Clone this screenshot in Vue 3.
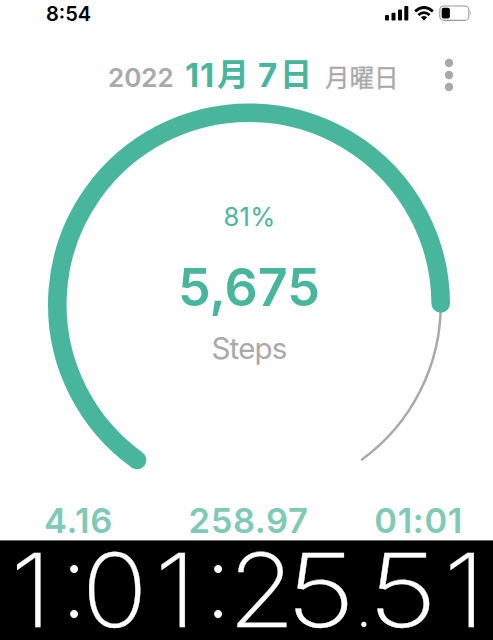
<script setup>
const clock = [
  { ch: '1', w: 62 }, { ch: ':', w: 22, kind: 'colon' },
  { ch: '0', w: 61 }, { ch: '1', w: 61 }, { ch: ':', w: 24, kind: 'colon' },
  { ch: '2', w: 60 }, { ch: '5', w: 65, kind: 'wide' }, { ch: '.', w: 16, kind: 'point' },
  { ch: '5', w: 67, kind: 'wide' }, { ch: '1', w: 53 }
]
</script>

<template>
  <main class="screen">
    <header class="status">
      <span class="time">8:54</span>
      <svg class="indicators" width="90" height="18" viewBox="0 0 90 18">
        <g fill="#000">
          <rect x="0" y="11" width="4" height="5.5" rx="1" />
          <rect x="6.5" y="8.7" width="4" height="7.8" rx="1" />
          <rect x="13" y="5.4" width="4" height="11.1" rx="1" />
          <rect x="19.3" y="2" width="4" height="14.5" rx="1" />
          <path d="M36.3 13.2Q39 11.2 41.7 13.2L39 16.2Z" stroke="#000" stroke-width=".7" stroke-linejoin="round" />
        </g>
        <g fill="none" stroke="#000" stroke-width="2.8">
          <path d="M30.1 7.4Q39 -0.4 47.9 7.4" />
          <path d="M33.4 11Q39 6.2 44.6 11" />
        </g>
        <rect x="54.8" y="2" width="29" height="14.4" rx="4" fill="none" stroke="#999" stroke-width="1.1" />
        <rect x="56.7" y="3.8" width="8.2" height="10.8" rx="2" fill="#000" />
        <path d="M85.4 7.2Q87.2 9.2 85.4 11.3Z" fill="#888" />
      </svg>
    </header>
    <section class="date">
      <span class="year">2022</span>
      <span class="day"><b>11</b><i>月</i><b class="seven">7</b><i>日</i></span>
      <span class="weekday">月曜日</span>
      <svg class="more" width="12" height="36" viewBox="0 0 12 36" fill="#a9a9a9">
        <circle cx="6" cy="6" r="4.2" /><circle cx="6" cy="18" r="4.2" /><circle cx="6" cy="30" r="4.2" />
      </svg>
    </section>
    <section class="progress">
      <svg class="ring" width="493" height="400" viewBox="0 100 493 400" fill="none" stroke-linecap="round">
        <path d="M440.7 303A191.7 191.7 0 0 1 362 459.5" stroke="#a9a9a9" stroke-width="2.5" />
        <path d="M137 460A191.7 191.7 0 1 1 440.7 303.5" stroke="#48b69d" stroke-width="18.6" />
      </svg>
      <div class="summary">
        <span class="percent">81%</span>
        <strong class="count">5,675</strong>
        <span class="unit">Steps</span>
      </div>
    </section>
    <section class="stats">
      <span>4.16</span><span class="calories">258.97</span><span>01:01</span>
    </section>
    <footer class="stopwatch">
      <span v-for="(c, i) in clock" :key="i" :class="c.kind" :style="{ width: c.w + 'px' }">{{ c.ch }}</span>
    </footer>
  </main>
</template>

<style>
body { margin: 0; background: #fff; }
</style>
<style scoped>
.screen { width: 493px; height: 640px; overflow: hidden; background: #fefefe; font-family: Inter, "Noto Sans CJK JP", sans-serif; display: flex; flex-direction: column; white-space: nowrap; }
.status { height: 50px; flex: none; display: flex; align-items: flex-start; justify-content: space-between; padding: 4px 18px 0 46px; box-sizing: border-box; }
.time { font-size: 20px; line-height: 20px; font-weight: 600; color: #000; }
.date { height: 50px; flex: none; display: flex; align-items: baseline; padding-left: 108px; line-height: 50px; position: relative; }
.year { width: 77px; font-size: 26px; font-weight: 600; color: #a9a9a9; }
.day { width: 140px; display: flex; align-items: baseline; color: #48b69d; }
.day b { font-size: 33px; font-weight: 700; letter-spacing: .8px; }
.day .seven { margin-left: 9px; }
.day i { font-style: normal; font-size: 32px; font-weight: 700; margin-left: 2px; transform: translateY(-1px); }
.weekday { font-size: 24.5px; font-weight: 400; font-family: "Noto Sans CJK JP", sans-serif; color: #a9a9a9; -webkit-text-stroke: .3px #a9a9a9; }
.more { position: absolute; left: 443px; top: 7px; }
.progress { height: 400px; flex: none; display: grid; }
.ring, .summary { grid-area: 1 / 1; }
.summary { display: flex; flex-direction: column; align-items: center; padding: 102px 0 0 5px; }
.percent { font-size: 25.5px; line-height: 30px; letter-spacing: .2px; padding-left: 1px; color: #48b69d; }
.count { font-size: 52px; line-height: 60px; font-weight: 600; margin-top: 26px; color: #48b69d; }
.unit { font-size: 29.5px; line-height: 36px; font-weight: 400; letter-spacing: -.8px; margin-top: 12px; color: #a9a9a9; }
.stats { height: 40px; flex: none; display: flex; justify-content: space-between; padding: 0 30px 0 44px; color: #7fcab7; font-size: 34.5px; line-height: 42px; font-weight: 600; letter-spacing: .6px; }
.calories { padding-left: 10px; }
.stopwatch { flex: 1; background: #000; border-top: 1px solid #666; color: #fff; display: flex; font-size: 102px; line-height: 98px; font-weight: 200; }
.stopwatch span { flex: none; text-align: center; transform: scaleX(1.07); -webkit-text-stroke: .3px #fff; }
.stopwatch .wide { transform: translateX(-2px) scaleX(1.18); }
.stopwatch .colon { transform: translate(-2px, -9px); -webkit-text-stroke: 0; }
.stopwatch .point { transform: translateX(-5px); -webkit-text-stroke: 0; font-weight: 100; }
</style>
